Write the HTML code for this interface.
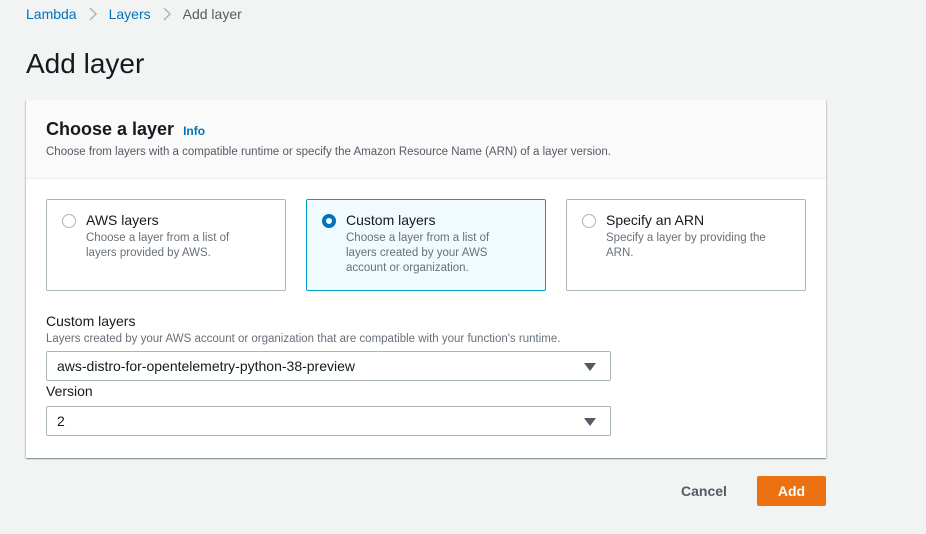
<!DOCTYPE html>
<html><head><style>
*{box-sizing:border-box;margin:0;padding:0}
body{width:926px;height:534px;background:#f2f3f3;font-family:"Liberation Sans",sans-serif;color:#16191f;position:relative;overflow:hidden}
.a{position:absolute}
.bc{top:6px;left:26px;font-size:14px;color:#545b64}
.bc span.l{color:#0073bb}
.bc svg{margin:0 12px;vertical-align:-2px}
h1{position:absolute;top:48px;left:26px;font-size:28px;font-weight:400}
.panel{left:26px;top:100px;width:800px;height:358px;background:#fff;box-shadow:0 1px 1px rgba(0,28,36,.3),1px 1px 1px rgba(0,28,36,.15),-1px 1px 1px rgba(0,28,36,.15)}
.hd{position:absolute;left:0;top:0;width:800px;height:79px;background:#fafafa;border-bottom:1px solid #eaeded}
.card{position:absolute;top:99px;width:240px;height:92px;border:1px solid #aab7b8;border-radius:2px;background:#fff}
.card.sel{border-color:#00a1c9;background:#f1faff}
.rd{position:absolute;left:15px;top:14px;width:14px;height:14px;border:1px solid #aab7b8;border-radius:50%;background:#fff}
.sel .rd{border:4px solid #0073bb}
.ct{position:absolute;left:39px;top:12px;font-size:14px}
.cd{position:absolute;left:39px;top:31px;font-size:11.5px;color:#687078;line-height:15px;width:160px}
.sl{position:absolute;left:20px;width:565px;height:30px;border:1px solid #aab7b8;border-radius:2px;background:#fff;font-size:14px;padding:6px 10px}
.tri{position:absolute;right:14px;top:11px;width:0;height:0;border-left:6px solid transparent;border-right:6px solid transparent;border-top:8px solid #545b64}
</style></head><body>
<div class="a bc"><span class="l">Lambda</span><svg width="8" height="14" viewBox="0 0 8 14"><path d="M1 1l6 6-6 6" fill="none" stroke="#aab7b8" stroke-width="1.5"/></svg><span class="l">Layers</span><svg width="8" height="14" viewBox="0 0 8 14"><path d="M1 1l6 6-6 6" fill="none" stroke="#aab7b8" stroke-width="1.5"/></svg>Add layer</div>
<h1>Add layer</h1>
<div class="a panel">
 <div class="hd">
  <div class="a" style="left:20px;top:19px;font-size:18px;font-weight:700">Choose a layer <span style="font-size:12px;color:#0073bb;margin-left:4px">Info</span></div>
  <div class="a" style="left:20px;top:46px;font-size:11.5px;color:#545b64">Choose from layers with a compatible runtime or specify the Amazon Resource Name (ARN) of a layer version.</div>
 </div>
 <div class="card" style="left:20px"><div class="rd"></div><div class="ct">AWS layers</div><div class="cd">Choose a layer from a list of layers provided by AWS.</div></div>
 <div class="card sel" style="left:280px"><div class="rd"></div><div class="ct">Custom layers</div><div class="cd">Choose a layer from a list of layers created by your AWS account or organization.</div></div>
 <div class="card" style="left:540px"><div class="rd"></div><div class="ct">Specify an ARN</div><div class="cd">Specify a layer by providing the ARN.</div></div>
 <div class="a" style="left:20px;top:213px;font-size:14px">Custom layers</div>
 <div class="a" style="left:20px;top:233px;font-size:11.5px;color:#687078">Layers created by your AWS account or organization that are compatible with your function's runtime.</div>
 <div class="sl" style="top:251px">aws-distro-for-opentelemetry-python-38-preview<div class="tri"></div></div>
 <div class="a" style="left:20px;top:283px;font-size:14px">Version</div>
 <div class="sl" style="top:306px">2<div class="tri"></div></div>
</div>
<div class="a" style="left:681px;top:483px;font-size:14px;font-weight:700;color:#545b64">Cancel</div>
<div class="a" style="left:757px;top:476px;width:69px;height:30px;background:#ec7211;border-radius:2px;color:#fff;font-weight:700;font-size:14px;text-align:center;line-height:30px">Add</div>
</body></html>
